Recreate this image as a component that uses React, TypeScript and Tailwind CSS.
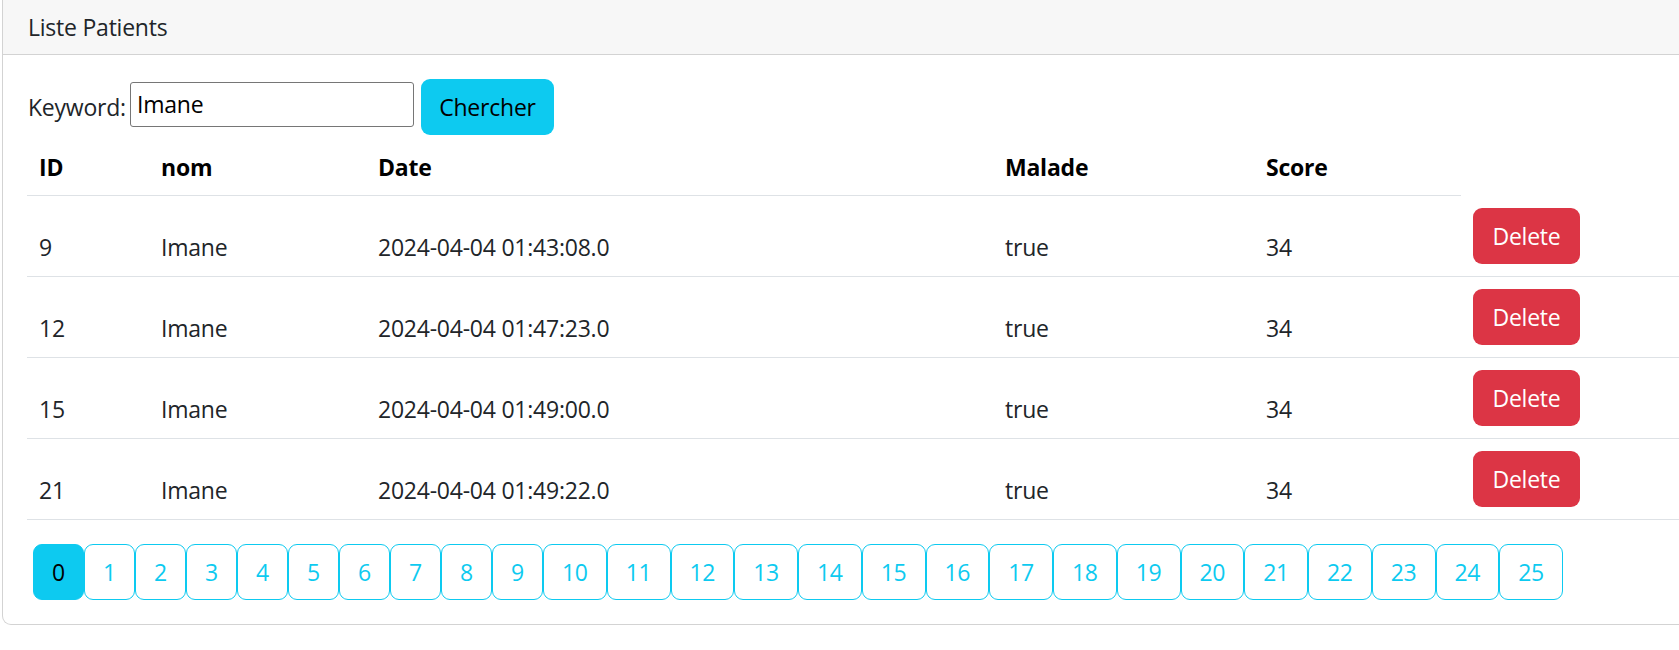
import React from "react";

const ROWS = [
  { id: 9, nom: "Imane", date: "2024-04-04 01:43:08.0", malade: "true", score: 34 },
  { id: 12, nom: "Imane", date: "2024-04-04 01:47:23.0", malade: "true", score: 34 },
  { id: 15, nom: "Imane", date: "2024-04-04 01:49:00.0", malade: "true", score: 34 },
  { id: 21, nom: "Imane", date: "2024-04-04 01:49:22.0", malade: "true", score: 34 },
];

const PAGES = Array.from({ length: 26 }, (_, i) => i);

export default function App() {
  const current = 0;

  return (
    <div className="h-[650px] w-full overflow-hidden bg-white font-['Segoe_UI','Open_Sans',sans-serif] text-[23px] leading-[36px] tracking-[-0.01em] text-[#212529]">
      <div className="ml-[2px] w-[1760px] rounded-b-[9px] border border-t-0 border-[#d3d3d3]">
        <div className="h-[55px] border-b border-[#d3d3d3] bg-[#f7f7f7] pl-[25px] pt-[9px]">
          Liste Patients
        </div>

        <div className="p-6">
          <form className="flex h-[56px] items-center" onSubmit={(e) => e.preventDefault()}>
            <label className="w-[103px] shrink-0 pl-[1px]">Keyword:</label>
            <input
              defaultValue="Imane"
              className="-mt-[6px] h-[45px] w-[284px] rounded-[3px] border border-[#767676] px-[6px] text-[23px] tracking-[-0.01em] text-black outline-none"
            />
            <button className="ml-[7px] h-[56px] w-[133px] rounded-[9px] bg-[#0dcaf0] text-black">
              Chercher
            </button>
          </form>

          <table className="mb-6 w-full table-fixed border-collapse">
            <colgroup>
              <col className="w-[122px]" />
              <col className="w-[217px]" />
              <col className="w-[627px]" />
              <col className="w-[261px]" />
              <col className="w-[207px]" />
              <col />
            </colgroup>
            <thead>
              <tr>
                {["ID", "nom", "Date", "Malade", "Score"].map((h) => (
                  <th
                    key={h}
                    className="border-b border-[#dee2e6] px-3 pt-[14px] pb-[10px] text-left align-bottom font-bold text-black"
                  >
                    {h}
                  </th>
                ))}
              </tr>
            </thead>
            <tbody>
              {ROWS.map((r) => (
                <tr key={r.id}>
                  <td className="border-b border-[#dee2e6] p-3 pb-[11px] align-bottom">{r.id}</td>
                  <td className="border-b border-[#dee2e6] p-3 pb-[11px] align-bottom">{r.nom}</td>
                  <td className="border-b border-[#dee2e6] p-3 pb-[11px] align-bottom">{r.date}</td>
                  <td className="border-b border-[#dee2e6] p-3 pb-[11px] align-bottom">{r.malade}</td>
                  <td className="border-b border-[#dee2e6] p-3 pb-[11px] align-bottom">{r.score}</td>
                  <td className="border-b border-[#dee2e6] p-3 align-bottom">
                    <button className="h-[56px] w-[107px] rounded-[9px] bg-[#dc3545] text-white">
                      Delete
                    </button>
                  </td>
                </tr>
              ))}
            </tbody>
          </table>

          <div className="flex pl-[6px]">
            {PAGES.map((p) => (
              <button
                key={p}
                className={`h-[56px] shrink-0 rounded-[9px] border border-[#0dcaf0] ${
                  p < 10 ? "w-[51px]" : "w-[63.75px]"
                } ${p === current ? "bg-[#0dcaf0] text-black" : "bg-white text-[#0dcaf0]"}`}
              >
                {p}
              </button>
            ))}
          </div>
        </div>
      </div>
    </div>
  );
}
